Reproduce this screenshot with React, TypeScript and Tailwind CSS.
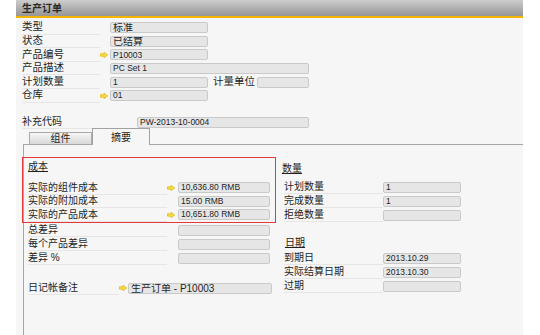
import React from "react";

const Arrow = () => (
  <svg width="8" height="6" viewBox="0 0 8 6" className="block">
    <polygon points="0.5,1.8 4,1.8 4,0.3 7.7,3 4,5.7 4,4.2 0.5,4.2" fill="#f7dc4a" stroke="#e2b300" strokeWidth="0.7" />
  </svg>
);

const Field = ({ w, children, cjk }: { w: string; children?: React.ReactNode; cjk?: boolean }) => (
  <div
    className={`${w} h-[11px] shrink-0 border border-[#c9c9c9] bg-[#e6e6e6] rounded-[2px] flex items-center pl-[2px] text-[#1e1e1e] whitespace-nowrap overflow-hidden ${
      cjk ? "text-[10px]" : "text-[8.5px]"
    }`}
    style={{ fontFamily: cjk ? '"Liberation Sans", "Noto Sans CJK SC", sans-serif' : '"Liberation Sans", sans-serif' }}
  >
    {children}
  </div>
);

type RowProps = {
  label: string;
  lw: string;
  aw: string;
  fw: string;
  arrow?: boolean;
  value?: React.ReactNode;
  h?: string;
  cjk?: boolean;
  size?: string;
};

const Row = ({ label, lw, aw, fw, arrow, value, h = "h-[14px]", cjk, size = "text-[10px]" }: RowProps) => (
  <div className={`${h} flex items-center`}>
    <div className={`${lw} shrink-0 h-full flex items-center border-b border-[#e6e6e6] ${size} text-[#1e1e1e] whitespace-nowrap`}>
      {label}
    </div>
    <div className={`${aw} shrink-0 flex items-center`}>{arrow ? <Arrow /> : null}</div>
    <Field w={fw} cjk={cjk}>
      {value}
    </Field>
  </div>
);

export default function App() {
  return (
    <div
      className="w-[540px] h-[335px] bg-white overflow-hidden"
      style={{ fontFamily: '"Liberation Sans", "Noto Sans CJK SC", sans-serif' }}
    >
      <div className="ml-[16px] w-[507px] h-[335px] bg-[#f6f6f6] flex flex-col">
        {/* title bar */}
        <div className="h-[16px] bg-gradient-to-b from-[#cdcdcd] to-[#969696] flex items-center pl-[6px]">
          <span className="text-[10px] font-bold text-[#2a2a2a]">生产订单</span>
        </div>
        <div className="h-[2px] bg-[#f3b500]" />

        {/* header fields */}
        <div className="h-[110px] pl-[6px] pt-[3px]">
          <Row h="h-[13.6px]" size="text-[10.5px]" label="类型" lw="w-[78px]" aw="w-[10px]" fw="w-[98px]" value="标准" cjk />
          <Row h="h-[13.6px]" size="text-[10.5px]" label="状态" lw="w-[78px]" aw="w-[10px]" fw="w-[98px]" value="已结算" cjk />
          <Row h="h-[13.6px]" size="text-[10.5px]" label="产品编号" lw="w-[78px]" aw="w-[10px]" fw="w-[98px]" arrow value="P10003" />
          <Row h="h-[13.6px]" size="text-[10.5px]" label="产品描述" lw="w-[78px]" aw="w-[10px]" fw="w-[199px]" value="PC Set 1" />
          <div className="h-[13.6px] flex items-center">
            <div className="w-[78px] shrink-0 h-full flex items-center border-b border-[#e6e6e6] text-[10.5px] text-[#1e1e1e]">计划数量</div>
            <div className="w-[10px] shrink-0" />
            <Field w="w-[98px]">1</Field>
            <div className="w-[49px] shrink-0 pl-[5px] h-full flex items-center whitespace-nowrap text-[10.5px] text-[#1e1e1e]">
              计量单位
            </div>
            <Field w="w-[52px]" />
          </div>
          <Row h="h-[13.6px]" size="text-[10.5px]" label="仓库" lw="w-[78px]" aw="w-[10px]" fw="w-[98px]" arrow value="01" />
          <div className="mt-[13px]">
            <Row h="h-[13.6px]" label="补充代码" lw="w-[115px]" aw="w-0" fw="w-[172px]" value="PW-2013-10-0004" />
          </div>
        </div>

        {/* tabs */}
        <div className="h-[16px] flex items-end pl-[13px] relative z-10">
          <div className="w-[63px] h-[12px] border border-b-0 border-[#a9a9a9] bg-gradient-to-b from-[#f6f6f6] to-[#d9d9d9] flex items-center justify-center text-[10px] text-[#1e1e1e]">
            组件
          </div>
          <div className="w-[58px] h-[17px] -mb-[1px] border border-b-0 border-[#a2a2a2] bg-[#f6f6f6] flex items-center justify-center text-[10px] text-[#1e1e1e]">
            摘要
          </div>
        </div>

        {/* tab content */}
        <div className="ml-[7px] flex-1 border-l border-t border-[#a6a6a6] flex items-start">
          {/* left column */}
          <div className="-ml-[2px] w-[254px] shrink-0 pt-[12px]">
            <div className="border border-[#e23a3c] h-[66px] pl-[5px] pt-[1px]">
              <div className="h-[14px] flex items-center text-[10px] text-[#1e1e1e] underline">成本</div>
              <div className="mt-[8px]">
                <Row h="h-[13.5px]" label="实际的组件成本" lw="w-[139px]" aw="w-[11px]" fw="w-[92px]" arrow value="10,636.80 RMB" />
                <Row h="h-[13.5px]" label="实际的附加成本" lw="w-[139px]" aw="w-[11px]" fw="w-[92px]" value="15.00 RMB" />
                <Row h="h-[13.5px]" label="实际的产品成本" lw="w-[139px]" aw="w-[11px]" fw="w-[92px]" arrow value="10,651.80 RMB" />
              </div>
            </div>
            <div className="pl-[6px]">
              <Row label="总差异" lw="w-[139px]" aw="w-[11px]" fw="w-[92px]" />
              <Row label="每个产品差异" lw="w-[139px]" aw="w-[11px]" fw="w-[92px]" />
              <Row label="差异 %" lw="w-[139px]" aw="w-[11px]" fw="w-[92px]" />
              <div className="mt-[16px]">
                <Row label="日记帐备注" lw="w-[91px]" aw="w-[9px]" fw="w-[144px]" arrow cjk value="生产订单 - P10003" />
              </div>
            </div>
          </div>

          {/* right column */}
          <div className="ml-[6px] pt-[16px]">
            <div className="h-[14px] flex items-center text-[10px] text-[#1e1e1e] underline">数量</div>
            <div className="mt-[5px] pl-[2px]">
              <Row label="计划数量" lw="w-[99px]" aw="w-0" fw="w-[78px]" value="1" />
              <Row label="完成数量" lw="w-[99px]" aw="w-0" fw="w-[78px]" value="1" />
              <Row label="拒绝数量" lw="w-[99px]" aw="w-0" fw="w-[78px]" />
            </div>
            <div className="mt-[13px] pl-[3px] h-[14px] flex items-center text-[10px] text-[#1e1e1e] underline">日期</div>
            <div className="mt-[2px] pl-[2px]">
              <Row label="到期日" lw="w-[99px]" aw="w-0" fw="w-[78px]" value="2013.10.29" />
              <Row label="实际结算日期" lw="w-[99px]" aw="w-0" fw="w-[78px]" value="2013.10.30" />
              <Row label="过期" lw="w-[99px]" aw="w-0" fw="w-[78px]" />
            </div>
          </div>
        </div>
      </div>
    </div>
  );
}
